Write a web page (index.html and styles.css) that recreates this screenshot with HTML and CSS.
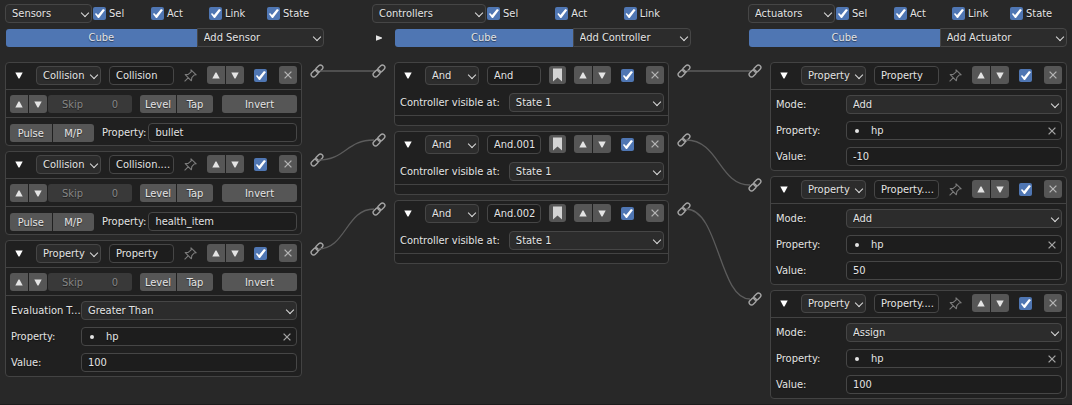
FILE: index.html
```html
<!DOCTYPE html>
<html lang="en">
<head>
    <meta charset="UTF-8">
    <meta name="viewport" content="width=device-width, initial-scale=1.0">
    <title>Logic Bricks</title>
    <link rel="stylesheet" href="styles.css">
</head>
<body>

    <!-- Shared icons -->
    <svg class="icons" width="0" height="0" aria-hidden="true">
        <symbol id="link" viewBox="0 0 14 14">
            <g fill="none" stroke="currentColor" stroke-width="1.4">
                <rect x="5.3" y="2.2" width="8" height="4.8" rx="2.4" transform="rotate(-45 9.3 4.6)"/>
                <rect x="0.7" y="7" width="8" height="4.8" rx="2.4" transform="rotate(-45 4.7 9.4)"/>
            </g>
        </symbol>
        <symbol id="pin" viewBox="0 0 13 13">
            <path d="M.6 12.4 4.4 8.6M1.2 5.6 4.2 5.4 7.2 2.8 7 .9 12.2 5.8 10.2 6 7.8 8.6 7.4 11.8Z" fill="none" stroke="currentColor" stroke-width="1.1" stroke-linejoin="round"/>
        </symbol>
        <symbol id="bookmark" viewBox="0 0 9 14">
            <path d="M0 .5H9V13.5L4.5 9.5 0 13.5Z" fill="currentColor"/>
        </symbol>
        <symbol id="down" viewBox="0 0 8 7">
            <path d="M.3.5H7.7L4.5 6.5H3.5Z" fill="currentColor"/>
        </symbol>
        <symbol id="up" viewBox="0 0 8 7">
            <path d="M.3 6.5H7.7L4.5.5H3.5Z" fill="currentColor"/>
        </symbol>
        <symbol id="right" viewBox="0 0 6 6">
            <path d="M0 .3 6 2.6V3.4L0 5.7Z" fill="currentColor"/>
        </symbol>
        <symbol id="cross" viewBox="0 0 8 8">
            <path d="M.6.6 7.4 7.4M7.4.6.6 7.4" fill="none" stroke="currentColor" stroke-width="1.3"/>
        </symbol>
    </svg>

    <main class="editor">

        <!-- Sensors -->
        <section class="column">
            <div class="filters">
                <span class="select sensors-menu"><select aria-label="Sensors menu"><option>Sensors</option></select></span>
                <label class="filter"><input type="checkbox" checked> Sel</label>
                <label class="filter"><input type="checkbox" checked> Act</label>
                <label class="filter"><input type="checkbox" checked> Link</label>
                <label class="filter"><input type="checkbox" checked> State</label>
            </div>
            <div class="object">
                <button class="cube">Cube</button>
                <span class="select add"><select aria-label="Add Sensor"><option>Add Sensor</option></select></span>
            </div>

            <div class="bricks">
                <div class="brick">
                    <div class="card">
                        <div class="head">
                            <button class="plain" aria-label="Collapse"><svg class="tri"><use href="#down"/></svg></button>
                            <span class="select"><select aria-label="Type"><option>Collision</option></select></span>
                            <input type="text" aria-label="Name" value="Collision">
                            <button class="pin" aria-label="Pin"><svg><use href="#pin"/></svg></button>
                            <span class="group"><button aria-label="Move up"><svg class="tri"><use href="#up"/></svg></button><button aria-label="Move down"><svg class="tri"><use href="#down"/></svg></button></span>
                            <input type="checkbox" aria-label="Active" checked>
                            <button class="close" aria-label="Remove"><svg><use href="#cross"/></svg></button>
                        </div>
                        <div class="row line">
                            <span class="group"><button aria-label="True level"><svg class="tri"><use href="#up"/></svg></button><button aria-label="False level"><svg class="tri"><use href="#down"/></svg></button></span>
                            <label class="skip">Skip <input type="text" value="0" disabled></label>
                            <span class="group level"><button>Level</button><button>Tap</button></span>
                            <button class="invert">Invert</button>
                        </div>
                        <div class="row">
                            <span class="group pulse"><button>Pulse</button><button>M/P</button></span>
                            <label class="prop">Property: <input type="text" value="bullet"></label>
                        </div>
                    </div>
                    <svg class="socket"><use href="#link"/></svg>
                </div>

                <div class="brick">
                    <div class="card">
                        <div class="head">
                            <button class="plain" aria-label="Collapse"><svg class="tri"><use href="#down"/></svg></button>
                            <span class="select"><select aria-label="Type"><option>Collision</option></select></span>
                            <input type="text" aria-label="Name" value="Collision....">
                            <button class="pin" aria-label="Pin"><svg><use href="#pin"/></svg></button>
                            <span class="group"><button aria-label="Move up"><svg class="tri"><use href="#up"/></svg></button><button aria-label="Move down"><svg class="tri"><use href="#down"/></svg></button></span>
                            <input type="checkbox" aria-label="Active" checked>
                            <button class="close" aria-label="Remove"><svg><use href="#cross"/></svg></button>
                        </div>
                        <div class="row line">
                            <span class="group"><button aria-label="True level"><svg class="tri"><use href="#up"/></svg></button><button aria-label="False level"><svg class="tri"><use href="#down"/></svg></button></span>
                            <label class="skip">Skip <input type="text" value="0" disabled></label>
                            <span class="group level"><button>Level</button><button>Tap</button></span>
                            <button class="invert">Invert</button>
                        </div>
                        <div class="row">
                            <span class="group pulse"><button>Pulse</button><button>M/P</button></span>
                            <label class="prop">Property: <input type="text" value="health_item"></label>
                        </div>
                    </div>
                    <svg class="socket"><use href="#link"/></svg>
                </div>

                <div class="brick">
                    <div class="card">
                        <div class="head">
                            <button class="plain" aria-label="Collapse"><svg class="tri"><use href="#down"/></svg></button>
                            <span class="select"><select aria-label="Type"><option>Property</option></select></span>
                            <input type="text" aria-label="Name" value="Property">
                            <button class="pin" aria-label="Pin"><svg><use href="#pin"/></svg></button>
                            <span class="group"><button aria-label="Move up"><svg class="tri"><use href="#up"/></svg></button><button aria-label="Move down"><svg class="tri"><use href="#down"/></svg></button></span>
                            <input type="checkbox" aria-label="Active" checked>
                            <button class="close" aria-label="Remove"><svg><use href="#cross"/></svg></button>
                        </div>
                        <div class="row line">
                            <span class="group"><button aria-label="True level"><svg class="tri"><use href="#up"/></svg></button><button aria-label="False level"><svg class="tri"><use href="#down"/></svg></button></span>
                            <label class="skip">Skip <input type="text" value="0" disabled></label>
                            <span class="group level"><button>Level</button><button>Tap</button></span>
                            <button class="invert">Invert</button>
                        </div>
                        <div class="fields">
                            <label class="field"><span>Evaluation T...</span><span class="select"><select><option>Greater Than</option></select></span></label>
                            <div class="field"><label for="sensor-prop">Property:</label><span class="search"><input type="text" id="sensor-prop" value="hp"><button aria-label="Clear"><svg><use href="#cross"/></svg></button></span></div>
                            <label class="field"><span>Value:</span><input type="text" value="100"></label>
                        </div>
                    </div>
                    <svg class="socket"><use href="#link"/></svg>
                </div>
            </div>
        </section>

        <svg class="wires" aria-hidden="true">
            <path d="M-4 71H51"/>
            <path d="M-6 160C22 160 22 140 50 140"/>
            <path d="M-6 249C22 249 22 209 50 209"/>
        </svg>

        <!-- Controllers -->
        <section class="column">
            <div class="filters">
                <span class="select controllers-menu"><select aria-label="Controllers menu"><option>Controllers</option></select></span>
                <label class="filter"><input type="checkbox" checked> Sel</label>
                <label class="filter"><input type="checkbox" checked> Act</label>
                <label class="filter"><input type="checkbox" checked> Link</label>
            </div>
            <div class="object">
                <button class="states" aria-label="Show states"><svg><use href="#right"/></svg></button>
                <button class="cube">Cube</button>
                <span class="select add"><select aria-label="Add Controller"><option>Add Controller</option></select></span>
            </div>

            <div class="bricks">
                <div class="brick">
                    <svg class="socket"><use href="#link"/></svg>
                    <div class="card controller">
                        <div class="head">
                            <button class="plain" aria-label="Collapse"><svg class="tri"><use href="#down"/></svg></button>
                            <span class="select"><select aria-label="Type"><option>And</option></select></span>
                            <input type="text" aria-label="Name" value="And">
                            <button class="bookmark" aria-label="Priority"><svg><use href="#bookmark"/></svg></button>
                            <span class="group"><button aria-label="Move up"><svg class="tri"><use href="#up"/></svg></button><button aria-label="Move down"><svg class="tri"><use href="#down"/></svg></button></span>
                            <input type="checkbox" aria-label="Active" checked>
                            <button class="close" aria-label="Remove"><svg><use href="#cross"/></svg></button>
                        </div>
                        <label class="state">Controller visible at: <span class="select"><select><option>State 1</option></select></span></label>
                    </div>
                    <svg class="socket"><use href="#link"/></svg>
                </div>

                <div class="brick">
                    <svg class="socket"><use href="#link"/></svg>
                    <div class="card controller">
                        <div class="head">
                            <button class="plain" aria-label="Collapse"><svg class="tri"><use href="#down"/></svg></button>
                            <span class="select"><select aria-label="Type"><option>And</option></select></span>
                            <input type="text" aria-label="Name" value="And.001">
                            <button class="bookmark" aria-label="Priority"><svg><use href="#bookmark"/></svg></button>
                            <span class="group"><button aria-label="Move up"><svg class="tri"><use href="#up"/></svg></button><button aria-label="Move down"><svg class="tri"><use href="#down"/></svg></button></span>
                            <input type="checkbox" aria-label="Active" checked>
                            <button class="close" aria-label="Remove"><svg><use href="#cross"/></svg></button>
                        </div>
                        <label class="state">Controller visible at: <span class="select"><select><option>State 1</option></select></span></label>
                    </div>
                    <svg class="socket"><use href="#link"/></svg>
                </div>

                <div class="brick">
                    <svg class="socket"><use href="#link"/></svg>
                    <div class="card controller">
                        <div class="head">
                            <button class="plain" aria-label="Collapse"><svg class="tri"><use href="#down"/></svg></button>
                            <span class="select"><select aria-label="Type"><option>And</option></select></span>
                            <input type="text" aria-label="Name" value="And.002">
                            <button class="bookmark" aria-label="Priority"><svg><use href="#bookmark"/></svg></button>
                            <span class="group"><button aria-label="Move up"><svg class="tri"><use href="#up"/></svg></button><button aria-label="Move down"><svg class="tri"><use href="#down"/></svg></button></span>
                            <input type="checkbox" aria-label="Active" checked>
                            <button class="close" aria-label="Remove"><svg><use href="#cross"/></svg></button>
                        </div>
                        <label class="state">Controller visible at: <span class="select"><select><option>State 1</option></select></span></label>
                    </div>
                    <svg class="socket"><use href="#link"/></svg>
                </div>
            </div>
        </section>

        <svg class="wires" aria-hidden="true">
            <path d="M-4 71H60"/>
            <path d="M-5 140C28 140 28 185 59 185"/>
            <path d="M-5 209C28 209 28 299 59 299"/>
        </svg>

        <!-- Actuators -->
        <section class="column">
            <div class="filters">
                <span class="select actuators-menu"><select aria-label="Actuators menu"><option>Actuators</option></select></span>
                <label class="filter"><input type="checkbox" checked> Sel</label>
                <label class="filter"><input type="checkbox" checked> Act</label>
                <label class="filter"><input type="checkbox" checked> Link</label>
                <label class="filter"><input type="checkbox" checked> State</label>
            </div>
            <div class="object">
                <button class="cube">Cube</button>
                <span class="select add"><select aria-label="Add Actuator"><option>Add Actuator</option></select></span>
            </div>

            <div class="bricks">
                <div class="brick">
                    <svg class="socket"><use href="#link"/></svg>
                    <div class="card">
                        <div class="head">
                            <button class="plain" aria-label="Collapse"><svg class="tri"><use href="#down"/></svg></button>
                            <span class="select"><select aria-label="Type"><option>Property</option></select></span>
                            <input type="text" aria-label="Name" value="Property">
                            <button class="pin" aria-label="Pin"><svg><use href="#pin"/></svg></button>
                            <span class="group"><button aria-label="Move up"><svg class="tri"><use href="#up"/></svg></button><button aria-label="Move down"><svg class="tri"><use href="#down"/></svg></button></span>
                            <input type="checkbox" aria-label="Active" checked>
                            <button class="close" aria-label="Remove"><svg><use href="#cross"/></svg></button>
                        </div>
                        <div class="fields">
                            <label class="field"><span>Mode:</span><span class="select"><select><option>Add</option></select></span></label>
                            <div class="field"><label for="act-prop-1">Property:</label><span class="search"><input type="text" id="act-prop-1" value="hp"><button aria-label="Clear"><svg><use href="#cross"/></svg></button></span></div>
                            <label class="field"><span>Value:</span><input type="text" value="-10"></label>
                        </div>
                    </div>
                </div>

                <div class="brick">
                    <svg class="socket"><use href="#link"/></svg>
                    <div class="card">
                        <div class="head">
                            <button class="plain" aria-label="Collapse"><svg class="tri"><use href="#down"/></svg></button>
                            <span class="select"><select aria-label="Type"><option>Property</option></select></span>
                            <input type="text" aria-label="Name" value="Property....">
                            <button class="pin" aria-label="Pin"><svg><use href="#pin"/></svg></button>
                            <span class="group"><button aria-label="Move up"><svg class="tri"><use href="#up"/></svg></button><button aria-label="Move down"><svg class="tri"><use href="#down"/></svg></button></span>
                            <input type="checkbox" aria-label="Active" checked>
                            <button class="close" aria-label="Remove"><svg><use href="#cross"/></svg></button>
                        </div>
                        <div class="fields">
                            <label class="field"><span>Mode:</span><span class="select"><select><option>Add</option></select></span></label>
                            <div class="field"><label for="act-prop-2">Property:</label><span class="search"><input type="text" id="act-prop-2" value="hp"><button aria-label="Clear"><svg><use href="#cross"/></svg></button></span></div>
                            <label class="field"><span>Value:</span><input type="text" value="50"></label>
                        </div>
                    </div>
                </div>

                <div class="brick">
                    <svg class="socket"><use href="#link"/></svg>
                    <div class="card">
                        <div class="head">
                            <button class="plain" aria-label="Collapse"><svg class="tri"><use href="#down"/></svg></button>
                            <span class="select"><select aria-label="Type"><option>Property</option></select></span>
                            <input type="text" aria-label="Name" value="Property....">
                            <button class="pin" aria-label="Pin"><svg><use href="#pin"/></svg></button>
                            <span class="group"><button aria-label="Move up"><svg class="tri"><use href="#up"/></svg></button><button aria-label="Move down"><svg class="tri"><use href="#down"/></svg></button></span>
                            <input type="checkbox" aria-label="Active" checked>
                            <button class="close" aria-label="Remove"><svg><use href="#cross"/></svg></button>
                        </div>
                        <div class="fields">
                            <label class="field"><span>Mode:</span><span class="select"><select><option>Assign</option></select></span></label>
                            <div class="field"><label for="act-prop-3">Property:</label><span class="search"><input type="text" id="act-prop-3" value="hp"><button aria-label="Clear"><svg><use href="#cross"/></svg></button></span></div>
                            <label class="field"><span>Value:</span><input type="text" value="100"></label>
                        </div>
                    </div>
                </div>
            </div>
        </section>

    </main>

</body>
</html>
```

FILE: styles.css
```css
* {
    box-sizing: border-box;
}
body {
    margin: 0;
    min-height: 100vh;
    background: #282828;
    border-bottom: 1px solid #1c1c1c;
    color: #e4e4e4;
    font-family: "DejaVu Sans Condensed", "DejaVu Sans", sans-serif;
    font-size: 11px;
    line-height: 17px;
    text-shadow: 0 1px 1px rgba(0, 0, 0, 0.5);
}
svg {
    display: block;
    width: 8px;
    height: 8px;
}
.icons {
    position: absolute;
    width: 0;
    height: 0;
}

/* Columns, with the wires drawn in the gaps between them */
.editor {
    display: grid;
    grid-template-columns: 1fr 48px 1fr 57px 1fr;
    padding: 0 5px;
}
.column {
    min-width: 0;
    padding-top: 4px;
}
.wires {
    width: 100%;
    height: 100%;
    overflow: visible;
    fill: none;
    stroke: #5c5c5c;
    stroke-width: 1.3;
}

/* Controls */
button, input, select {
    margin: 0;
    font: inherit;
    color: inherit;
    text-shadow: inherit;
}
button {
    display: flex;
    align-items: center;
    justify-content: center;
    height: 18px;
    padding: 0;
    border: 0;
    border-radius: 3px;
    background: #565656;
}
input[type="text"], select {
    display: block;
    width: 100%;
    min-width: 0;
    height: 19px;
    padding: 0 0 0 6px;
    border: 1px solid #464646;
    border-radius: 4px;
    background: #1d1d1d;
}
select {
    appearance: none;
    background: #2c2c2c;
}
.select {
    position: relative;
    flex: 1;
    min-width: 0;
}
.select::after {
    content: "";
    position: absolute;
    right: 4px;
    top: 6px;
    width: 5px;
    height: 5px;
    border: solid #dcdcdc;
    border-width: 0 1px 1px 0;
    transform: rotate(45deg);
    pointer-events: none;
}
input[type="checkbox"] {
    appearance: none;
    flex: none;
    width: 13px;
    height: 13px;
    border-radius: 2px;
    background: #4f76b3;
}
input[type="checkbox"]:checked::before {
    content: "";
    display: block;
    width: 13px;
    height: 13px;
    background: #fff;
    clip-path: polygon(2px 7px, 3px 6px, 5px 8px, 10px 2px, 12px 3px, 6px 11px, 5px 11px);
}
.tri {
    height: 7px;
}
.group {
    display: flex;
    gap: 1px;
    flex: none;
}
.group button {
    width: 18px;
}
.group button:first-child {
    border-radius: 3px 0 0 3px;
}
.group button:last-child {
    border-radius: 0 3px 3px 0;
}

/* Column top */
.filters {
    display: flex;
    align-items: center;
    height: 19px;
}
.filters .select {
    flex: none;
}
.sensors-menu, .actuators-menu {
    width: 87px;
}
.controllers-menu {
    width: 114px;
}
.filter {
    display: flex;
    align-items: center;
    flex: 1;
    gap: 3px;
    padding-left: 1px;
}
.object {
    display: flex;
    align-items: center;
    height: 19px;
    margin-top: 5px;
}
.cube {
    flex: 3;
    margin-left: 1px;
    background: #4f76b3;
    border-radius: 3px 0 0 3px;
}
.add {
    flex: 2;
}
.add select {
    border-radius: 0 4px 4px 0;
}
.states {
    width: 14px;
    margin-right: 8px;
    background: none;
}
.states svg {
    height: 6px;
    width: 6px;
}

/* Bricks */
.bricks {
    display: flex;
    flex-direction: column;
    gap: 5px;
    margin-top: 15px;
}
.brick {
    display: flex;
    gap: 8px;
}
.socket {
    flex: none;
    width: 14px;
    height: 14px;
    margin-top: 2px;
    color: #a4a4a4;
}
.card {
    flex: 1;
    min-width: 0;
    border: 1px solid #434343;
    border-radius: 4px;
    background: #202020;
}
.head {
    display: flex;
    align-items: start;
    gap: 8px;
    height: 27px;
    padding: 3px 4px 4px;
    border-bottom: 1px solid #434343;
}
.head .select, .head input[type="text"] {
    flex: 1 1 50px;
}
.head input[type="checkbox"] {
    margin: 3px 4px 0 2px;
}
.plain, .pin {
    background: none;
    color: #fff;
}
.plain, .close {
    width: 18px;
    flex: none;
}
.close {
    color: #b4b4b4;
}
.pin, .bookmark {
    width: 17px;
    flex: none;
}
.pin {
    color: #7c7c7c;
}
.pin svg {
    width: 13px;
    height: 13px;
}
.bookmark {
    color: #d4d4d4;
}
.bookmark svg {
    width: 9px;
    height: 14px;
}
.row {
    display: flex;
    align-items: end;
    height: 27px;
    padding: 0 4px 3px;
}
.line {
    height: 28px;
    padding-bottom: 4px;
    border-bottom: 1px solid #434343;
}
.skip {
    display: flex;
    flex: 1;
    align-items: center;
    height: 18px;
    margin: 0 8px 0 1px;
    padding: 0 14px;
    border-radius: 3px;
    background: #393939;
    color: #868686;
}
.skip input[type="text"] {
    flex: 1;
    height: 18px;
    padding: 0;
    border: 0;
    background: none;
    text-align: right;
}
.level {
    width: 73px;
}
.level button, .pulse button {
    flex: 1;
}
.invert {
    width: 75px;
    margin-left: 9px;
}
.pulse {
    width: 84px;
}
.prop {
    display: flex;
    flex: 1;
    align-items: center;
    gap: 2px;
    margin-left: 8px;
}
.prop input[type="text"] {
    flex: 1;
}

/* Labelled fields */
.fields {
    display: grid;
    gap: 7px;
    padding: 5px 4px 4px 5px;
}
.field {
    display: grid;
    grid-template-columns: 70px 1fr;
    align-items: center;
}
.field > :first-child {
    white-space: nowrap;
}
.search {
    position: relative;
}
.search::before {
    content: "";
    position: absolute;
    left: 9px;
    top: 8px;
    width: 4px;
    height: 4px;
    border-radius: 50%;
    background: #e4e4e4;
}
.search input[type="text"] {
    padding: 0 20px 0 24px;
}
.search button {
    position: absolute;
    right: 6px;
    top: 1px;
    background: none;
    color: #a4a4a4;
}

/* Controllers */
.controller .head {
    border-bottom-color: transparent;
}
.state {
    display: flex;
    align-items: center;
    gap: 9px;
    height: 26px;
    margin-bottom: 9px;
    padding: 0 4px 0 5px;
    border-bottom: 1px solid #434343;
}
```
